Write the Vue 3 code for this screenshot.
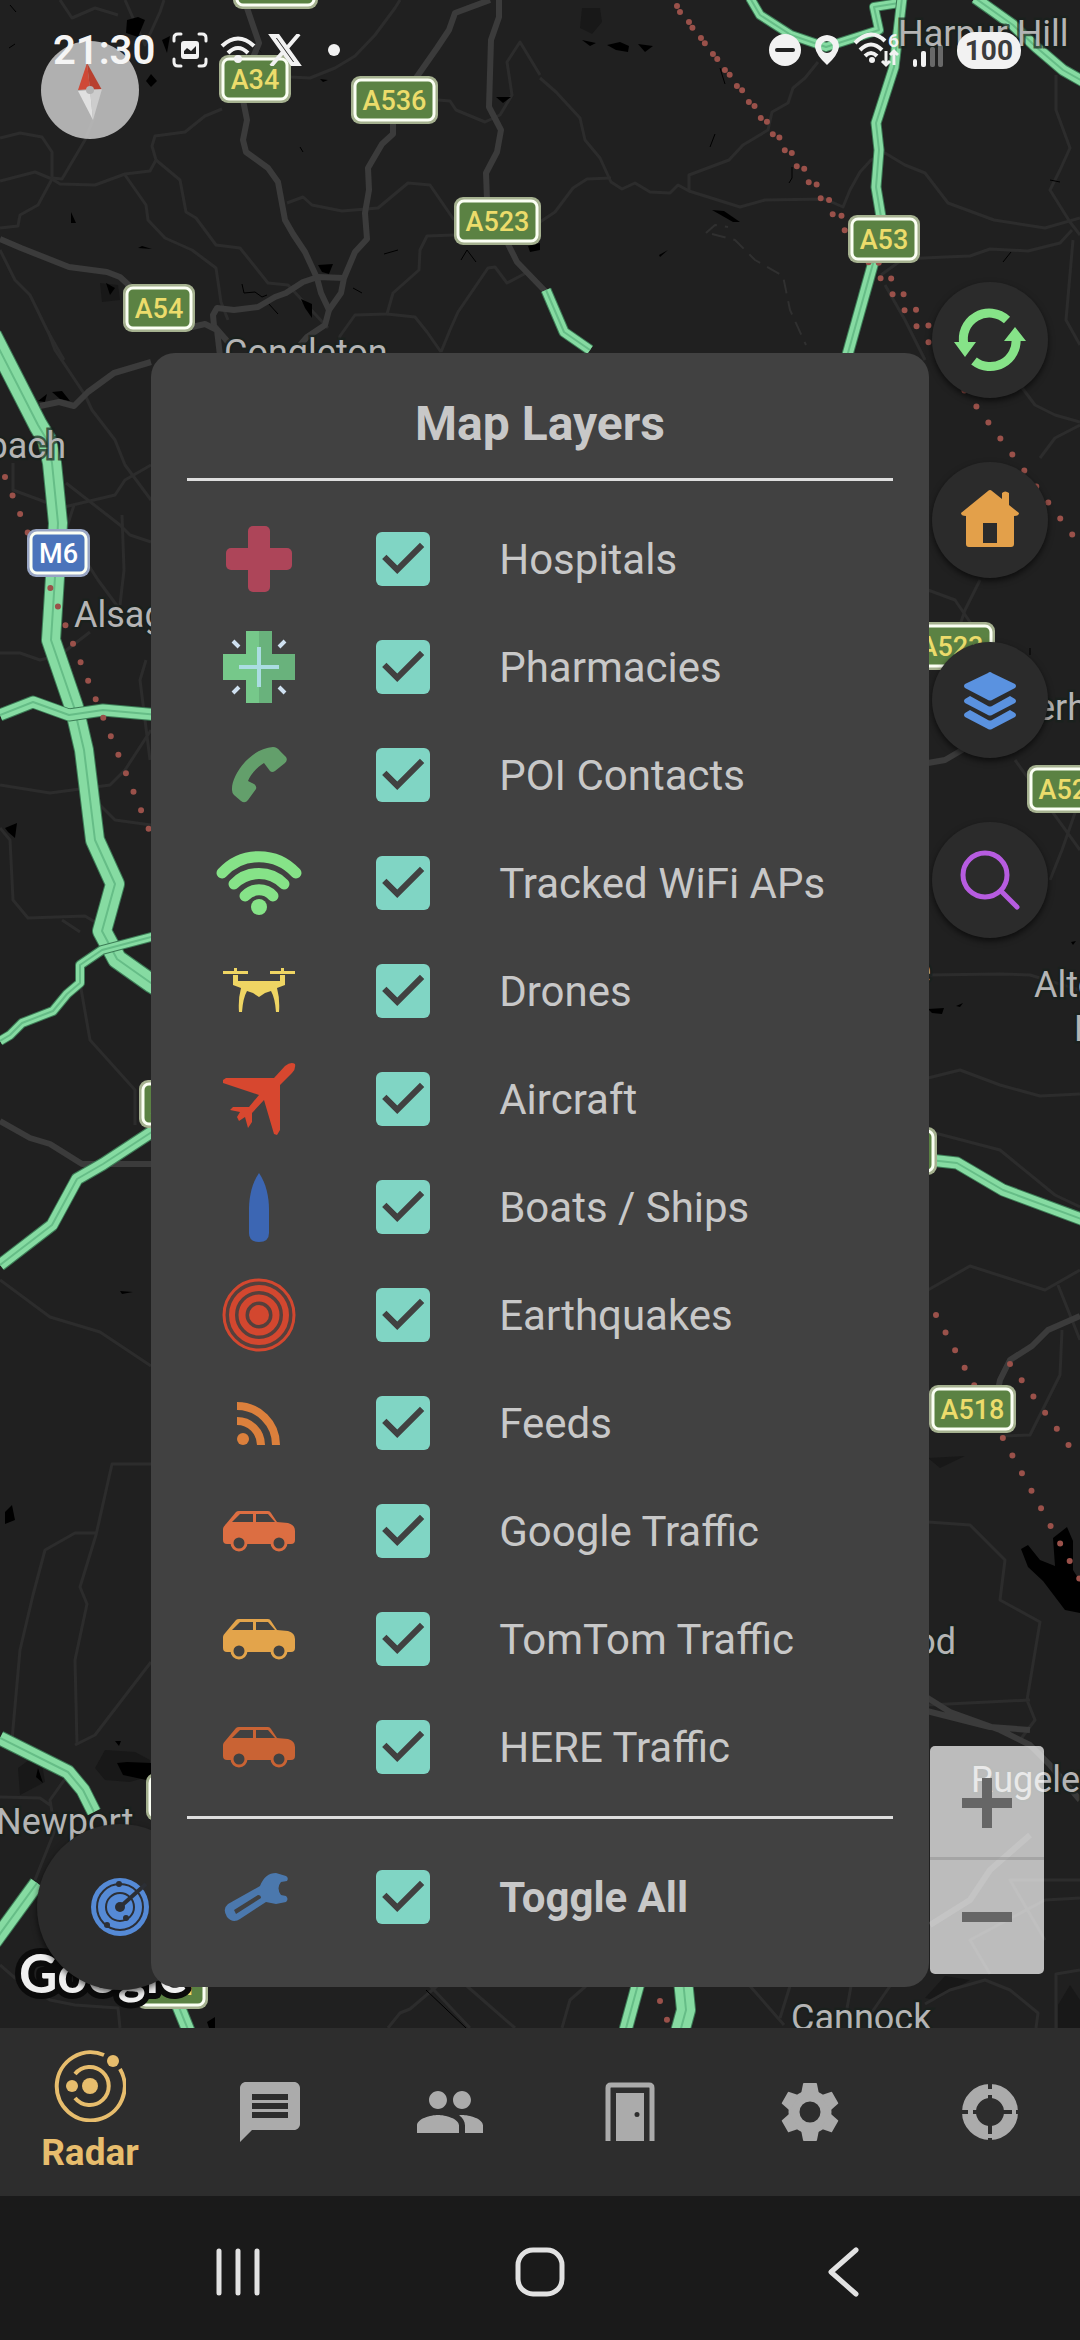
<script setup>
import { computed, ref } from 'vue'

const layers = ref([
  { id: 'hospitals', label: 'Hospitals', on: true },
  { id: 'pharmacies', label: 'Pharmacies', on: true },
  { id: 'contacts', label: 'POI Contacts', on: true },
  { id: 'wifi', label: 'Tracked WiFi APs', on: true },
  { id: 'drones', label: 'Drones', on: true },
  { id: 'aircraft', label: 'Aircraft', on: true },
  { id: 'boats', label: 'Boats / Ships', on: true },
  { id: 'quakes', label: 'Earthquakes', on: true },
  { id: 'feeds', label: 'Feeds', on: true },
  { id: 'google', label: 'Google Traffic', on: true, car: '#dc6e42' },
  { id: 'tomtom', label: 'TomTom Traffic', on: true, car: '#e3a44b' },
  { id: 'here', label: 'HERE Traffic', on: true, car: '#c96334' },
])

const allOn = computed({
  get: () => layers.value.every((l) => l.on),
  set: (value) => layers.value.forEach((l) => (l.on = value)),
})

// Traffic-coloured roads: centre line points and width
const traffic = [
  { w: 18, d: 'M-8 335L38 425L47 440L52 463L58 523L55 577L51 640L74 707L84 750L95 840L115 884L102 931L117 959L151 983L180 1000' },
  { w: 11, d: 'M0 715L33 702L69 715L103 710L170 716' },
  { w: 8, d: 'M0 1041L10 1035L22 1023L53 1011L67 994L80 983V965L102 950L170 932' },
  { w: 11, d: 'M0 1265L52 1225L77 1179L103 1164L170 1120' },
  { w: 13, d: 'M0 1738L68 1772L83 1790L94 1812' },
  { w: 14, d: 'M-6 1942L37 1883' },
  { w: 12, d: 'M176 2000L189 2032' },
  { w: 12, d: 'M642 1970L625 2032' },
  { w: 18, d: 'M682 1970L686 2010L680 2032' },
  { w: 8, d: 'M750 -2L760 15L791 35L826 47L879 30L874 7L905 2' },
  { w: 9, d: 'M902 -2L896 50L894 67L876 123L879 150L876 187L881 217' },
  { w: 10, d: 'M874 260L846 360' },
  { w: 10, d: 'M975 -2L1013 25L1036 47L1063 70L1084 82' },
  { w: 9, d: 'M546 290L564 332L590 350' },
  { w: 11, d: 'M930 1160L957 1163L1003 1190L1084 1220' },
]

const majorRoads = [
  'M247 8L259 43L252 60M243 100L247 120L243 140L246 152L268 168L278 182L285 220L293 234L305 252L317 278L321 293L329 310L325 325L307 337L300 345',
  'M393 122V134L382 144L368 168L369 190L365 213L367 239L355 252L344 278L341 293L329 310',
  'M344 278L318 277L303 282L286 293L275 297L258 307L234 310L217 308L213 315L214 326L228 342',
  'M416 78L437 48L449 30L455 13L490 0M499 -2V17L491 40L489 107L501 130L497 152L486 173L487 200M508 244L517 262L545 291',
  'M0 239L21 248L69 267L107 272L120 277L132 288M192 327L205 324L217 330L220 356',
  'M40 406L59 402L74 406L88 392L114 373L151 362',
  'M928 763L945 760L962 750L990 732L1030 722',
  'M995 1405L1000 1380L1010 1360L1032 1346L1048 1330L1080 1316',
  'M915 1690L950 1712L1000 1730L1030 1745L1050 1765L1080 1800M915 1708L990 1727L1030 1730',
  'M0 1121L30 1138L50 1144L82 1164L151 1164',
  'M930 1925L970 1900L990 1870L1030 1835',
]

const minorRoads = [
  'M0 138L20 133L42 137L52 152V178L62 179L85 140L95 115',
  'M0 181L35 172L52 179L60 184L95 185L125 174L150 171L156 160L152 146L155 136L185 132L205 116L222 109',
  'M125 175L146 205L148 220L165 238L192 250L216 268L221 302L228 320',
  'M156 160L180 180L186 212L196 218L216 245L240 248L268 283L288 285L328 328',
  'M52 179L38 205L20 215L18 226L0 228M0 250L15 280L30 295L48 332L64 360',
  'M287 203L303 197L312 205L342 211L378 208L408 183L430 185L454 220',
  'M454 235L427 236L420 250L419 270L393 293L387 314L355 315L340 336L338 345',
  'M387 314L415 317L427 332L441 352M441 352L450 330L458 312L488 268L495 267L507 283L528 272',
  'M290 77L310 78L335 68L355 56L375 35L395 8L400 0M438 100L450 101L456 110L485 122L500 115L512 95L507 62L520 42L540 75',
  'M125 0L145 45L160 12L164 0M60 0L72 18L95 8L118 15',
  'M540 78L556 92L580 118L585 140L600 158L611 182L622 189L635 183L650 192L670 193L678 185L689 191L689 175L729 160L743 145L768 130L772 112L788 103L793 88L805 78L818 62',
  'M540 222L555 212L573 188L587 179L611 178M689 191L740 207L765 200L825 199L843 207L850 190L860 172L871 160L885 153L905 165L925 173L948 203L994 220L1045 228L1080 218',
  'M881 275L903 259L945 257L970 256L990 249L1028 251L1060 243L1072 230M1056 75V110L1070 148L1060 170L1050 190L1070 222L1080 235M1073 240L1066 320L1080 345',
  'M885 285L905 320L925 360M1020 385L1035 405L1055 415L1080 422M1080 425L1055 438L1040 458',
  'M48 331L55 350L85 395L92 410L115 440L125 465L151 500M66 483L120 525L130 535L151 542M13 463V490L40 500L60 508L115 495L125 480L151 465',
  'M74 505L66 530L98 580L118 607M122 515L124 570L120 605M0 653L20 653L40 660L60 655L90 632',
  'M0 785L50 793L110 785L125 770L151 730M146 660L140 680L150 760M95 800L115 820L151 825',
  'M0 828L10 840L13 900L28 918L85 916L100 925M62 920L80 932M80 983L90 1040L135 1090V1125',
  'M0 1280L50 1317L100 1332L151 1366M151 1464H112L96 1535L80 1587L87 1604L75 1660L77 1745',
  'M96 1533H75L45 1550L33 1595L20 1650L12 1740M75 1745L95 1735L151 1662M0 1797L40 1798L50 1805M70 1772L50 1800L55 1830L35 1880',
  'M0 1965L15 1978L50 2000L75 2005L118 2008L120 2028M388 2028L400 2013L410 2009L450 1975M460 1980L515 2028M415 1970L470 2028',
  'M928 975L1000 974L1030 975L1080 990M928 1078L960 1070L1000 1085L1040 1096L1080 1094M935 1133L1000 1150L1055 1195L1080 1207',
  'M928 1290L970 1266L1045 1290L1080 1270M1058 1285L1080 1340M1062 1330L1060 1375L1030 1435L1000 1436M928 1522L970 1525L1005 1560L1000 1600L1040 1622L1027 1700L1035 1720L1020 1740M928 1705L1030 1700',
  'M562 2028L570 2000L586 1986M750 1986L784 2025M790 1986L780 2018M851 1986L846 2014M890 1986L870 2015M925 2004L950 1990L985 1980L1010 1990L1038 2013L1036 2028M1056 2028V1974L1080 1970',
  'M990 1974L970 1940L1045 1900L1080 1898M1045 1940L1010 1880L1080 1880M928 590L955 600L972 625M980 580L965 610L955 640M1015 760L1080 850M1050 880L1062 850L1076 810',
]

const blackSpots = [
  'M127 20L138 17L145 20L138 37L126 33Z', 'M146 81L151 74L157 81L151 87Z', 'M162 40L170 36L167 53Z',
  'M71 212L76 223L71 223Z', 'M138 248L152 249L142 246Z', 'M106 283L115 288L110 295Z', 'M318 265L333 264L329 274L322 272Z',
  'M301 299L312 304V318L305 308Z', 'M226 32L252 43L262 53L250 43Z', 'M496 97L511 97L503 103Z', 'M320 79L328 80L323 82Z',
  'M528 246L540 243V250L530 252Z', 'M607 45L620 42L629 46L628 52L616 50Z', 'M638 44L653 46L645 52Z', 'M582 40L596 43L590 46Z',
  'M712 210L724 211L740 222L733 222Z', 'M659 255L668 250L660 257Z', 'M38 401L47 394L45 402Z', 'M52 392L62 391L70 401L60 399Z',
  'M5 828L17 823L15 838L8 832Z', 'M28 1183L32 1188Z', 'M5 1512L12 1505L15 1520L5 1524Z', 'M120 1291L133 1292L122 1294Z',
  'M117 1763L127 1762L151 1763V1781L123 1775Z', 'M36 1777L38 1768L43 1783Z', 'M115 1741L121 1741L119 1746Z', 'M207 2022L215 2017V2028H209Z',
  'M1021 1549L1028 1545L1040 1560L1055 1566L1053 1538L1067 1527L1073 1541V1570L1080 1581V1613L1065 1610L1043 1581L1028 1567Z',
  'M928 1009L944 1008L942 1014L932 1013Z', 'M956 1006L963 1003L960 1007Z', 'M1071 942L1076 941L1073 945Z', 'M986 1335L991 1343Z',
]

const shields = [
  { t: 'A537', x: 233, y: -39, w: 85 },
  { t: 'A34', x: 219, y: 55, w: 72 },
  { t: 'A536', x: 351, y: 76, w: 87 },
  { t: 'A523', x: 454, y: 197, w: 87 },
  { t: 'A54', x: 123, y: 284, w: 72 },
  { t: 'A53', x: 848, y: 215, w: 72 },
  { t: 'M6', x: 27, y: 529, w: 63, motorway: true },
  { t: 'A523', x: 908, y: 622, w: 87 },
  { t: 'A521', x: 1027, y: 765, w: 87 },
  { t: 'A50', x: 865, y: 1127, w: 72 },
  { t: 'A53', x: 139, y: 1080, w: 72 },
  { t: 'A518', x: 929, y: 1385, w: 87 },
  { t: 'A518', x: 146, y: 1773, w: 87 },
  { t: 'A41', x: 136, y: 1961, w: 72 },
]

const places = [
  { t: 'Harpur Hill', x: 898, y: 46 },
  { t: 'Congleton', x: 224, y: 365 },
  { t: 'Sandbach', x: 66, y: 458, anchor: 'end' },
  { t: 'Alsager', x: 74, y: 627 },
  { t: 'erhouses', x: 1036, y: 720 },
  { t: 'Stone', x: 931, y: 983, anchor: 'end' },
  { t: 'Alton', x: 1034, y: 997 },
  { t: 'R', x: 1074, y: 1041 },
  { t: 'od', x: 956, y: 1654, anchor: 'end' },
  { t: 'Newport', x: -4, y: 1834 },
  { t: 'Rugeley', x: 971, y: 1792 },
  { t: 'Cannock', x: 791, y: 2030 },
]
</script>

<template>
  <div class="screen">
    <main class="map">
      <svg class="canvas" viewBox="0 0 1080 2028" preserveAspectRatio="xMidYMid slice" role="img" aria-label="Map of Staffordshire">
        <g fill="#181818">
          <path d="M100 283L118 285L120 300L102 302ZM582 8L600 8L602 22L592 34L580 28ZM95 1768L105 1750L135 1752L150 1760V1776L130 1782L105 1780ZM18 1768L40 1752L45 1782L20 1795ZM928 1458L965 1456L940 1468ZM1058 2005L1070 1985L1080 2000V2028H1058ZM925 1998L945 1976L970 1980L935 2000Z" />
        </g>
        <g class="line" stroke="#2c2c2c" stroke-width="3">
          <path v-for="d in minorRoads" :key="d" :d="d" />
        </g>
        <g fill="#000">
          <path v-for="d in blackSpots" :key="d" :d="d" />
          <path class="line" stroke="#000" d="M242 284L244 293L255 292L262 297L267 295M268 303L278 314M10 5L16 12M9 48L15 44M461 260L467 250L476 262M720 68L725 84M710 147L715 134M792 167V178L789 183M1050 180L1060 182M1003 262L1011 252M426 1990L466 2028M353 288L362 293M384 254L398 250M300 147L303 152M1030 648V655" />
        </g>
        <g class="line" stroke="#3b3b3b" stroke-width="6">
          <path v-for="d in majorRoads" :key="d" :d="d" />
        </g>
        <path class="line" stroke="#303030" stroke-width="2" stroke-dasharray="14 8" d="M706 233L715 225L728 227M712 234L735 240L755 260L783 276L790 310L806 345" />
        <g v-for="r in traffic" :key="r.d" class="line">
          <path :d="r.d" stroke="#3c7c56" :stroke-width="r.w + 2" />
          <path :d="r.d" stroke="#86dba2" :stroke-width="r.w" />
          <path :d="r.d" stroke="#66bd87" stroke-width="2" />
        </g>
        <g class="line" stroke="#9a514a" stroke-width="6" stroke-linecap="round" stroke-dasharray="0 20">
          <path d="M677 6L1080 545" />
          <path d="M680 12L932 330" />
          <path d="M5 477L154 842" />
          <path d="M936 1315L1080 1580" />
          <path d="M1010 1364L1080 1461" />
          <path d="M660 2001L670 2028" />
        </g>
        <g v-for="p in places" :key="p.t" class="place">
          <text :x="p.x" :y="p.y" :text-anchor="p.anchor || 'start'">{{ p.t }}</text>
        </g>
        <g v-for="s in shields" :key="s.t + s.y" class="shield">
          <rect :x="s.x" :y="s.y" :width="s.w" height="48" rx="9" :fill="s.motorway ? '#98a5c4' : '#a5b18f'" />
          <rect :x="s.x + 4" :y="s.y + 4" :width="s.w - 8" height="40" rx="6" :fill="s.motorway ? '#4b74bb' : '#5b8243'" stroke="#fbfff4" stroke-width="3" />
          <text :x="s.x + s.w / 2" :y="s.y + 34" text-anchor="middle" :fill="s.motorway ? '#fff' : '#ecdc6b'">{{ s.t }}</text>
        </g>
        <text class="logo" x="19" y="1993">Google</text>
      </svg>

      <button class="compass" type="button" aria-label="Reset bearing">
        <svg viewBox="-49 -49 98 98">
          <path d="M-3 -27L-12 0L0 -1Z" fill="#cf4937" />
          <path d="M-3 -27L0 -1L12 0Z" fill="#b8402f" />
          <path d="M-12 1L0 0L3 30Z" fill="#e0e0e0" />
          <path d="M0 0L12 -1L3 30Z" fill="#cdcdcd" />
          <circle r="4" fill="#b4b4b4" />
        </svg>
      </button>

      <div class="tools">
        <button class="fab" type="button" aria-label="Refresh">
          <svg viewBox="-36 -36 72 72">
            <g fill="none" stroke="#86e388" stroke-width="9">
              <path d="M-26 5A26 26 0 0 1 17 -20" />
              <path d="M26 -2A26 26 0 0 1 -16 21" />
            </g>
            <path d="M-36 2H-14L-25 17ZM36 1H14L25 -13Z" fill="#86e388" />
          </svg>
        </button>
        <button class="fab" type="button" aria-label="Home">
          <svg viewBox="-36 -36 72 72">
            <path fill="#e3a04a" fill-rule="evenodd" d="M-2 -29Q0 -31 2 -29L12 -21V-27Q15 -30 19 -27V-15L29 -7Q29 -4 24 -4V24Q24 27 21 27H-21Q-24 27 -24 24V-4Q-29 -4 -29 -7ZM-7 3V23H7V3Z" />
          </svg>
        </button>
        <button class="fab" type="button" aria-label="Map layers">
          <svg viewBox="-36 -36 72 72" fill="#5a92e0">
            <path d="M-2 -27Q0 -29 2 -27L25 -16Q27 -14 25 -12L2 0Q0 1 -2 0L-25 -12Q-27 -14 -25 -16Z" />
            <path d="M-25 -1L-20 -4L-2 6Q0 7 2 6L20 -4L25 -1Q27 1 25 3L2 15Q0 16 -2 15L-25 3Q-27 1 -25 -1Z" />
            <path d="M-25 13L-20 10L-2 20Q0 21 2 20L20 10L25 13Q27 15 25 17L2 29Q0 30 -2 29L-25 17Q-27 15 -25 13Z" />
          </svg>
        </button>
        <button class="fab" type="button" aria-label="Search">
          <svg viewBox="-36 -36 72 72" fill="none" stroke="#b75ce0" stroke-width="5" stroke-linecap="round">
            <circle cx="-5" cy="-5" r="22" />
            <path d="M11 11L27 27" />
          </svg>
        </button>
      </div>

      <button class="fab scan" type="button" aria-label="Scan">
        <svg viewBox="-36 -36 72 72">
          <circle r="29" fill="#558ad6" />
          <g fill="none" stroke="#2c2f35" stroke-width="2">
            <circle r="23" />
            <circle r="14" />
          </g>
          <g fill="#2c2f35">
            <circle r="5" />
            <circle cx="-1" cy="-23" r="3" />
            <circle cx="6" cy="11" r="3" />
            <circle cx="-13" cy="18" r="3" />
          </g>
          <path d="M0 0L26 -23" stroke="#2c2f35" stroke-width="4" />
        </svg>
      </button>

      <div class="zoom">
        <button type="button" aria-label="Zoom in">
          <svg viewBox="0 0 50 50"><path d="M0 25H50M25 0V50" stroke="#666" stroke-width="10" /></svg>
        </button>
        <button type="button" aria-label="Zoom out">
          <svg viewBox="0 0 50 50"><path d="M0 25H50" stroke="#666" stroke-width="10" /></svg>
        </button>
      </div>
    </main>

    <header class="status">
      <div class="status-side">
        <time class="clock">21:30</time>
        <svg width="36" height="36" viewBox="0 0 36 36" fill="none" stroke="#f2f2f2" stroke-width="3" stroke-linecap="round">
          <path d="M2 9V6Q2 2 6 2H9M27 2H30Q34 2 34 6V9M34 27V30Q34 34 30 34H27M9 34H6Q2 34 2 30V27" />
          <path fill="#f2f2f2" stroke="none" fill-rule="evenodd" d="M12 9H24Q27 9 27 12V24Q27 27 24 27H12Q9 27 9 24V12Q9 9 12 9ZM12 22V19L15 16L19 19L24 14V22Z" />
        </svg>
        <svg width="36" height="28" viewBox="0 0 36 28" fill="none" stroke="#f2f2f2" stroke-width="4">
          <path d="M2 10Q18 -5 34 10M8 17Q18 7 28 17" />
          <circle cx="18" cy="23" r="4" fill="#f2f2f2" stroke="none" />
        </svg>
        <svg width="34" height="32" viewBox="0 0 34 32" fill="none" stroke="#f2f2f2" stroke-width="4">
          <path d="M4 2H10L30 30H24ZM31 0L19 14M3 32L15 18" />
        </svg>
        <svg class="dot" width="12" height="12" viewBox="0 0 12 12"><circle cx="6" cy="6" r="6" fill="#f2f2f2" /></svg>
      </div>
      <div class="status-side right">
        <svg width="32" height="32" viewBox="0 0 32 32"><circle cx="16" cy="16" r="16" fill="#f2f2f2" /><path d="M8 16H24" stroke="#222" stroke-width="4" stroke-linecap="round" /></svg>
        <svg width="24" height="30" viewBox="0 0 24 30"><path fill="#f2f2f2" fill-rule="evenodd" d="M12 0Q24 1 24 12Q23 20 12 30Q1 20 0 12Q0 1 12 0ZM12 6A6 6 0 1 0 12 18A6 6 0 1 0 12 6Z" /></svg>
        <svg width="46" height="36" viewBox="0 0 46 36">
          <g fill="none" stroke="#f2f2f2" stroke-width="4">
            <path d="M2 11Q18 -5 32 9M7 18Q18 7 29 18M12 24Q18 18 24 24" />
            <path stroke-width="3" d="M33 19V33M29 29L33 33L37 29M41 33V19M37 23L41 19L45 23" />
          </g>
          <circle cx="19" cy="28" r="3" fill="#f2f2f2" />
          <text class="gen" x="35" y="15" fill="#f2f2f2">6</text>
        </svg>
        <svg class="bars" width="30" height="22" viewBox="0 0 30 22" fill="#f2f2f2">
          <rect y="14" width="4" height="8" rx="2" /><rect x="8" y="6" width="5" height="16" rx="2" />
          <g opacity="0.35"><rect x="17" y="2" width="5" height="20" rx="2" /><rect x="25" width="5" height="22" rx="2" /></g>
        </svg>
        <span class="battery">100</span>
      </div>
    </header>

    <nav class="tabs" aria-label="Sections">
      <a class="tab active" href="#radar" aria-current="page">
        <svg viewBox="-36 -36 72 72">
          <g fill="none" stroke="currentColor" stroke-width="4">
            <path d="M14 -31A34 34 0 1 0 30 -17" />
            <path d="M-15 -12A19 19 0 1 1 -15 12" />
          </g>
          <g fill="currentColor"><circle r="8" /><circle cx="-18" r="6" /><circle cx="23" cy="-25" r="6" /></g>
        </svg>
        <span>Radar</span>
      </a>
      <a class="tab" href="#messages" aria-label="Messages">
        <svg viewBox="0 0 24 24" fill="currentColor"><path d="M20 2H4c-1.1 0-2 .9-2 2v18l4-4h14c1.1 0 2-.9 2-2V4c0-1.1-.9-2-2-2zm-2 12H6v-2h12v2zm0-3H6V9h12v2zm0-3H6V6h12v2z" /></svg>
      </a>
      <a class="tab" href="#people" aria-label="People">
        <svg viewBox="0 0 24 24" fill="currentColor"><path d="M16 11c1.66 0 2.99-1.34 2.99-3S17.66 5 16 5c-1.66 0-3 1.34-3 3s1.34 3 3 3zm-8 0c1.66 0 2.99-1.34 2.99-3S9.66 5 8 5C6.34 5 5 6.34 5 8s1.34 3 3 3zm0 2c-2.33 0-7 1.17-7 3.5V19h14v-2.5c0-2.33-4.67-3.5-7-3.5zm8 0c-.29 0-.62.02-.97.05 1.16.84 1.97 1.97 1.97 3.45V19h6v-2.5c0-2.33-4.67-3.5-7-3.5z" /></svg>
      </a>
      <a class="tab" href="#rooms" aria-label="Rooms">
        <svg viewBox="-36 -36 72 72">
          <path d="M-22 29V-24Q-22 -27 -19 -27H19Q22 -27 22 -24V29" fill="none" stroke="currentColor" stroke-width="5" />
          <path fill="currentColor" fill-rule="evenodd" d="M-14 -19H14V29H-14ZM7 0A2 2 0 0 0 7 5A2 2 0 0 0 7 0Z" />
        </svg>
      </a>
      <a class="tab" href="#settings" aria-label="Settings">
        <svg viewBox="-36 -36 72 72">
          <circle r="16" fill="none" stroke="currentColor" stroke-width="11" />
          <path v-for="a in [0, 60, 120, 180, 240, 300]" :key="a" :transform="`rotate(${a})`" fill="currentColor" d="M-6 -29H6Q7 -29 7 -28L9 -18H-9L-7 -28Q-7 -29 -6 -29Z" />
        </svg>
      </a>
      <a class="tab" href="#help" aria-label="Help">
        <svg viewBox="-36 -36 72 72">
          <circle r="21" fill="none" stroke="currentColor" stroke-width="14" />
          <path d="M0 -29V-23M0 29V26M-29 0H-22M29 0H26M0 -17V-12M0 22V12M-17 0H-12M22 0H12" stroke="#2d2d2d" stroke-width="4" />
        </svg>
      </a>
    </nav>

    <footer class="system">
      <button type="button" aria-label="Recent apps">
        <svg viewBox="-26 -26 52 52"><path d="M-19 -21V21M0 -21V21M19 -21V21" /></svg>
      </button>
      <button type="button" aria-label="Home screen">
        <svg viewBox="-26 -26 52 52"><rect x="-22" y="-22" width="44" height="44" rx="15" /></svg>
      </button>
      <button type="button" aria-label="Back">
        <svg viewBox="-26 -26 52 52"><path d="M14 -22L-11 0L14 22" /></svg>
      </button>
    </footer>

    <div class="overlay">
      <section class="dialog" role="dialog" aria-labelledby="dialog-title">
        <h1 id="dialog-title">Map Layers</h1>
        <div class="rows">
          <label v-for="layer in layers" :key="layer.id" class="row">
            <svg class="icon" viewBox="0 0 72 72" aria-hidden="true">
              <g v-if="layer.id === 'hospitals'" fill="#ad4559">
                <rect x="25" y="3" width="22" height="66" rx="5" /><rect x="3" y="25" width="66" height="22" rx="5" />
              </g>
              <g v-else-if="layer.id === 'pharmacies'">
                <path fill="#76c88a" d="M23 0H36V72H23V49H0V23H23Z" />
                <path fill="#69b27c" d="M49 0H36V72H49V49H72V23H49Z" />
                <path d="M16 36H56M36 16V56" stroke="#abdde2" stroke-width="4" />
                <path d="M10 10L16 16M62 10L56 16M10 62L16 56M62 62L56 56" stroke="#cfe0f0" stroke-width="4" />
              </g>
              <path v-else-if="layer.id === 'contacts'" fill="#639f6b" d="M9 51C8 36 28 9 50 8Q54 8 57 12L63 18Q65 21 62 24L52 32Q49 34 47 32L41 24C34 28 27 36 25 42L31 45Q34 47 33 50L25 61Q22 65 18 62L11 56Q9 54 9 51Z" />
              <g v-else-if="layer.id === 'wifi'" fill="none" stroke="#86e388" stroke-width="11" stroke-linecap="round">
                <path d="M-1 26A50 50 0 0 1 73 26M11 37A35 35 0 0 1 61 37M22 49A19 19 0 0 1 50 49" />
                <circle cx="36" cy="60" r="8" fill="#86e388" stroke="none" />
              </g>
              <path v-else-if="layer.id === 'drones'" fill="#efd563" d="M0 16H11V13H14V16H25V19H0ZM47 16H58V13H61V16H72V19H47ZM10 20H15V26H57V20H62V30L54 33Q57 44 56 57H53Q52 43 48 36L42 38L36 42L30 38L24 36Q20 43 19 57H16Q15 44 18 33L10 30Z" />
              <path v-else-if="layer.id === 'aircraft'" fill="#d7472f" d="M0 17L3 15H51L62 3Q68 -2 72 1Q73 6 69 10L57 22V67L54 72L51 71L41 37L29 50V59L25 65L22 54L16 58L14 54L17 49L7 47L10 44H26L36 32L0 20Z" />
              <path v-else-if="layer.id === 'boats'" fill="#3c66b3" d="M36 2C43 12 46 26 46 38V62Q46 71 36 71Q26 71 26 62V38C26 26 29 12 36 2Z" />
              <g v-else-if="layer.id === 'quakes'" fill="none" stroke="#d3472f">
                <circle cx="36" cy="36" r="35" fill="#55403c" stroke-width="3" />
                <circle cx="36" cy="36" r="27" stroke-width="6" />
                <circle cx="36" cy="36" r="17" stroke-width="7" />
                <circle cx="36" cy="36" r="10" fill="#d3472f" stroke="none" />
              </g>
              <g v-else-if="layer.id === 'feeds'" fill="none" stroke="#dc803c" stroke-width="8">
                <path d="M14 19A39 39 0 0 1 53 58M14 34A24 24 0 0 1 38 58" />
                <circle cx="20" cy="52" r="6" fill="#dc803c" stroke="none" />
              </g>
              <g v-else-if="layer.car" :fill="layer.car">
                <path fill-rule="evenodd" d="M16 16H45Q47 16 48 18L54 27L65 28Q72 30 72 36V45Q72 49 68 49H4Q0 49 0 45V34Q0 32 3 29L13 17Q14 16 16 16ZM9 27H30V19H17ZM33 19V27H52L45 19Z" />
                <g fill="#414141" :stroke="layer.car" stroke-width="3"><circle cx="16" cy="48" r="7" /><circle cx="56" cy="48" r="7" /></g>
              </g>
            </svg>
            <input v-model="layer.on" class="check" type="checkbox" />
            <span>{{ layer.label }}</span>
          </label>
        </div>
        <label class="row all">
          <svg class="icon" viewBox="0 0 72 72" aria-hidden="true">
            <path fill="#4b78ad" fill-rule="evenodd" d="M5 43L37 25Q42 12 53 12L63 15Q66 17 64 20L58 21Q53 27 58 34L63 35Q66 38 63 41L53 43L43 41L17 58Q10 63 4 56Q-1 48 5 43ZM11 49L13 53L38 37Q38 34 35 34Z" />
          </svg>
          <input v-model="allOn" class="check" type="checkbox" />
          <span>Toggle All</span>
        </label>
      </section>
    </div>
  </div>
</template>

<style>
body {
  background: #1a1a1a;
}
</style>

<style scoped>
.screen {
  position: relative;
  display: flex;
  flex-direction: column;
  min-height: 100vh;
  overflow: hidden;
  font-family: Roboto, "Liberation Sans", sans-serif;
  color: #c8c8c8;
}

button {
  display: grid;
  place-items: center;
  padding: 0;
  border: 0;
  background: none;
  cursor: pointer;
}

/* Map */
.map {
  position: relative;
  flex: 1;
  overflow: hidden;
  background: #202020;
}

.canvas {
  position: absolute;
  inset: 0;
  width: 100%;
  height: 100%;
}

.line {
  fill: none;
  stroke-linejoin: round;
}

.place text {
  font-size: 36px;
  fill: #b4b4b4;
  stroke: rgba(24, 32, 28, 0.7);
  stroke-width: 5px;
  paint-order: stroke;
}

.shield text {
  font-size: 27px;
  font-weight: 500;
}

.logo {
  font-family: Lato, sans-serif;
  font-size: 53px;
  font-weight: 700;
  fill: #f0f0f0;
  stroke: #0b0b0b;
  stroke-width: 12px;
  stroke-linejoin: round;
  paint-order: stroke;
}

.compass {
  position: absolute;
  top: 41px;
  left: 41px;
  width: 98px;
  height: 98px;
  border-radius: 50%;
  background: rgba(200, 200, 200, 0.86);
}

.tools {
  position: absolute;
  top: 282px;
  right: 32px;
  display: flex;
  flex-direction: column;
  gap: 64px;
}

.fab {
  width: 116px;
  height: 116px;
  border-radius: 50%;
  background: #2b2b2b;
  box-shadow: 0 3px 6px rgba(0, 0, 0, 0.6);
}

.fab svg {
  width: 72px;
  height: 72px;
}

.scan {
  position: absolute;
  left: 37px;
  bottom: 38px;
  width: 166px;
  height: 166px;
}

.zoom {
  position: absolute;
  right: 36px;
  bottom: 54px;
  display: grid;
  width: 114px;
  border-radius: 5px;
  background: rgba(255, 255, 255, 0.7);
}

.zoom button {
  height: 114px;
}

.zoom button + button {
  box-shadow: 0 -3px 0 rgba(130, 130, 130, 0.4);
}

.zoom svg {
  width: 50px;
  height: 50px;
}

/* Status bar */
.status {
  position: absolute;
  top: 0;
  left: 0;
  right: 0;
  display: flex;
  align-items: center;
  justify-content: space-between;
  height: 100px;
  padding: 0 59px 0 53px;
  color: #f5f5f5;
}

.status-side {
  display: flex;
  align-items: center;
  gap: 12px;
}

.status-side.right {
  gap: 14px;
}

.clock {
  width: 107px;
  font-size: 40px;
  font-weight: 600;
}

.dot {
  margin-left: 14px;
}

.gen {
  font-size: 19px;
  font-weight: 700;
}

.bars {
  align-self: end;
  margin-bottom: 2px;
}

.battery {
  padding: 0 8px;
  border-radius: 18px;
  background: #f2f2f2;
  color: #3c3c3c;
  font-size: 28px;
  font-weight: 700;
  line-height: 37px;
}

/* Bottom tabs */
.tabs {
  display: grid;
  grid-template-columns: repeat(6, 1fr);
  height: 168px;
  background: #2d2d2d;
}

.tab {
  display: flex;
  flex-direction: column;
  align-items: center;
  justify-content: center;
  gap: 10px;
  color: #ababab;
  font-size: 37px;
  font-weight: 700;
  line-height: 42px;
  text-decoration: none;
}

.tab svg {
  width: 72px;
  height: 72px;
}

.tab.active {
  color: #e7bd6d;
}

/* System navigation */
.system {
  display: grid;
  grid-template-columns: repeat(3, 28%);
  justify-content: center;
  height: 144px;
  background: #1a1a1a;
}

.system svg {
  width: 52px;
  height: 52px;
  margin-top: 8px;
  fill: none;
  stroke: #e2e2e2;
  stroke-width: 5px;
  stroke-linecap: round;
  stroke-linejoin: round;
}

/* Layer dialog */
.overlay {
  position: absolute;
  inset: 0;
  display: grid;
  place-items: center;
}

.dialog {
  box-sizing: border-box;
  width: 72%;
  padding: 36px;
  border-radius: 24px;
  background: #414141;
}

h1 {
  margin: 0;
  padding-bottom: 20px;
  border-bottom: 3px solid #dedede;
  font-size: 48px;
  font-weight: 700;
  line-height: 69px;
  text-align: center;
}

.rows {
  padding: 24px 0 15px;
  border-bottom: 3px solid #dedede;
}

.row {
  display: grid;
  grid-template-columns: 153px 123px 1fr;
  align-items: center;
  height: 108px;
  padding-left: 36px;
  font-size: 42px;
  cursor: pointer;
}

.row.all {
  margin-top: 24px;
  font-weight: 700;
}

.icon {
  width: 72px;
  height: 72px;
  overflow: visible;
}

.check {
  appearance: none;
  width: 54px;
  height: 54px;
  margin: 0;
  border: 6px solid #b0b0b0;
  border-radius: 6px;
}

.check:checked {
  border: 0;
  background: #80d5c4;
}

.check:checked::before {
  content: "";
  display: block;
  height: 100%;
  background: #414141;
  clip-path: polygon(39% 78%, 11% 50%, 19% 42%, 39% 62%, 81% 20%, 89% 28%);
}
</style>
